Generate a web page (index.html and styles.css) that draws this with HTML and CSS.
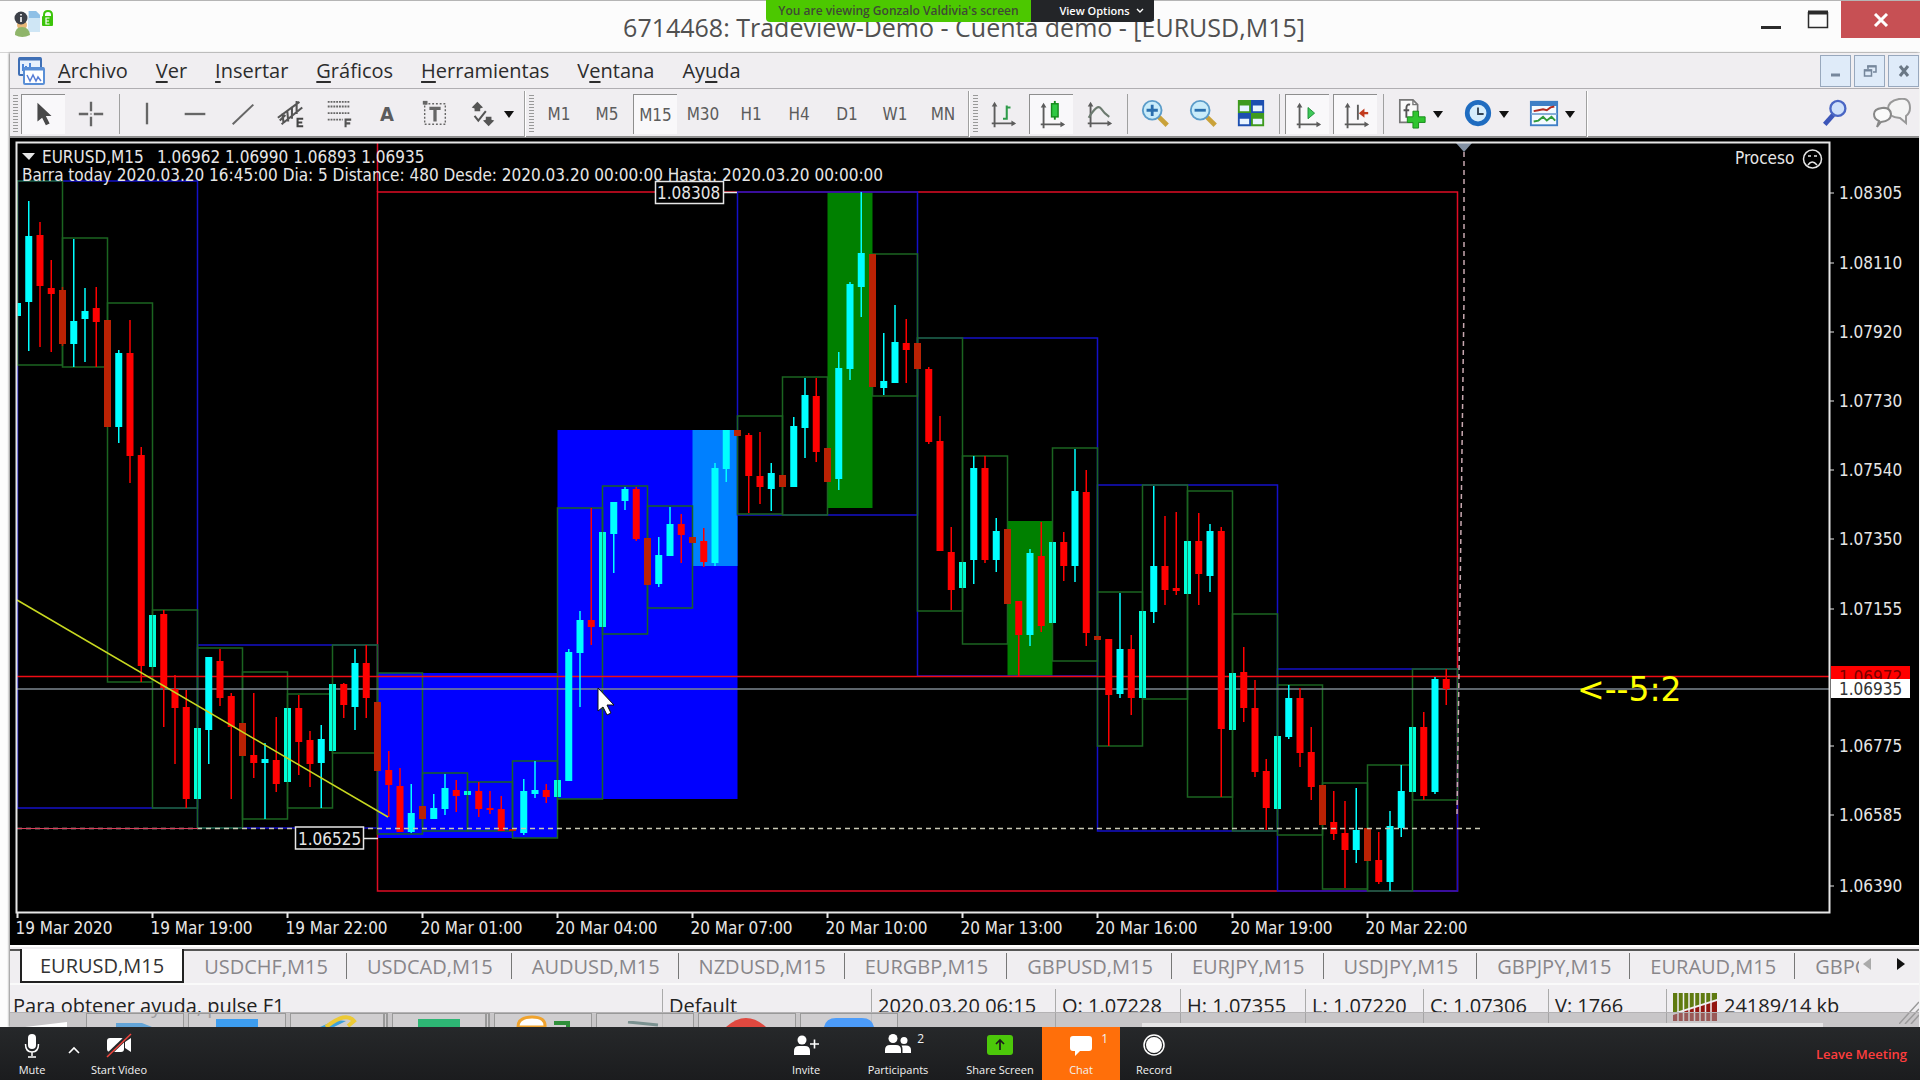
FILE: index.html
```html
<!DOCTYPE html>
<html lang="es">
<head>
    <meta charset="utf-8">
    <title>6714468: Tradeview-Demo - Cuenta demo - [EURUSD,M15]</title>
    <link rel="stylesheet" href="styles.css">
</head>
<body>

<div class="share-banner">
    <span class="share-info">You are viewing Gonzalo Valdivia's screen</span>
    <button class="share-options" type="button">View Options
        <svg width="8" height="6" viewBox="0 0 8 6"><path d="M1 1l3 3 3-3" fill="none" stroke="#fff" stroke-width="1.4"/></svg>
    </button>
</div>

<header class="titlebar">
    <div class="title-icons">
        <svg width="46" height="36" viewBox="0 0 46 36">
            <path d="M15 6h8l4 4v17H15z" fill="#cfe6f5"/>
            <path d="M16 6h7l4 4v3H16z" fill="#8fc0e6"/>
            <circle cx="9" cy="20" r="5" fill="#e8b878"/>
            <path d="M2 30q0-8 7-8t8 8q-8 4-15 0z" fill="#8fb56a"/>
            <circle cx="8" cy="13" r="6.500" fill="#3c4048"/>
            <path d="M8 12v5M8 9v1.500" stroke="#fff" stroke-width="1.600"/>
            <path d="M31 13v-3q0-4 4-4t4 4v3" fill="none" stroke="#3cc40a" stroke-width="2"/>
            <rect x="29" y="11" width="11" height="10" rx="1" fill="#3cc40a"/>
            <path d="M36.500 13H33v6h3.500M33 16h3" fill="none" stroke="#fff" stroke-width="1.200"/>
        </svg>
    </div>
    <h1>6714468: Tradeview-Demo - Cuenta demo - [EURUSD,M15]</h1>
    <div class="win-buttons">
        <button type="button" aria-label="Minimizar"><svg width="22" height="22" viewBox="0 0 22 22"><path d="M1 18.500h20" stroke="#2b2b2b" stroke-width="3"/></svg></button>
        <button type="button" aria-label="Maximizar"><svg width="22" height="22" viewBox="0 0 22 22"><path d="M1.500 3v15.500h19V3" fill="none" stroke="#2b2b2b" stroke-width="1.500"/><path d="M1 3.500h20" stroke="#2b2b2b" stroke-width="4"/></svg></button>
        <button type="button" class="win-close" aria-label="Cerrar"><svg width="16" height="14" viewBox="0 0 16 14"><path d="M2 1l12 12M14 1L2 13" stroke="#fff" stroke-width="3"/></svg></button>
    </div>
</header>

<main class="terminal">
    <div class="menubar">
        <svg class="doc-icon" width="30" height="30" viewBox="0 0 30 30">
            <rect x="2" y="2" width="22" height="17" rx="1" fill="#e9f2fd" stroke="#3f6fb5" stroke-width="2"/>
            <path d="M2 3h22" stroke="#3f6fb5" stroke-width="3"/>
            <path d="M6 8v7M9 10v6M13 7v7" stroke="#4e86d8" stroke-width="2"/>
            <rect x="7" y="12" width="20" height="16" rx="1" fill="#fff" stroke="#5a8fd6" stroke-width="2"/>
            <path d="M7 13h20" stroke="#5a8fd6" stroke-width="3"/>
            <path d="M10 19l3 6 3-6 3 6 2-4 3 4" fill="none" stroke="#5a7fd6" stroke-width="1.500"/>
        </svg>
        <nav>
            <a href="#"><u>A</u>rchivo</a>
            <a href="#"><u>V</u>er</a>
            <a href="#"><u>I</u>nsertar</a>
            <a href="#"><u>G</u>ráficos</a>
            <a href="#"><u>H</u>erramientas</a>
            <a href="#">V<u>e</u>ntana</a>
            <a href="#">Ay<u>u</u>da</a>
        </nav>
        <div class="mdi-buttons">
            <button type="button" aria-label="Minimizar gráfico"><svg width="14" height="14" viewBox="0 0 14 14"><path d="M2 11h9" stroke="#76879c" stroke-width="3"/></svg></button>
            <button type="button" aria-label="Restaurar gráfico"><svg width="14" height="14" viewBox="0 0 14 14"><path d="M5 5V2h8v6h-3" fill="none" stroke="#76879c" stroke-width="1.500"/><path d="M4 2.500h9M1 6.500h8" stroke="#76879c" stroke-width="2"/><rect x="1.500" y="6" width="7" height="6" fill="none" stroke="#76879c" stroke-width="1.500"/></svg></button>
            <button type="button" aria-label="Cerrar gráfico"><svg width="14" height="14" viewBox="0 0 14 14"><path d="M3 2l8 10M11 2L3 12" stroke="#6b7885" stroke-width="3"/></svg></button>
        </div>
    </div>

    <div class="toolbar">
        <i class="grip"></i>
        <button class="tool active" type="button" aria-label="Cursor"><svg viewBox="0 0 32 32"><path d="M9 3v20l5-4 4 8 4-2-4-8h6z" fill="#484848"/></svg></button>
        <button class="tool" type="button" aria-label="Cruz"><svg viewBox="0 0 32 32"><path d="M16 3v10M16 19v10M3 16h10M19 16h10" stroke="#666" stroke-width="2.500"/><path d="M16 15v2" stroke="#666"/></svg></button>
        <i class="sep"></i>
        <button class="tool" type="button" aria-label="Línea vertical"><svg viewBox="0 0 32 32"><path d="M16 4v23" stroke="#666" stroke-width="2.500"/></svg></button>
        <button class="tool" type="button" aria-label="Línea horizontal"><svg viewBox="0 0 32 32"><path d="M5 16h22" stroke="#666" stroke-width="2.500"/></svg></button>
        <button class="tool" type="button" aria-label="Línea de tendencia"><svg viewBox="0 0 32 32"><path d="M5 27L27 6" stroke="#666" stroke-width="2.200"/></svg></button>
        <button class="tool" type="button" aria-label="Canal equidistante"><svg viewBox="0 0 32 32"><path d="M2 20L25 3M6 27L28 9M4 23l6-6M7 15l1 11M12 12l1 12M17 8l0 13M22 2l0 14" stroke="#555" stroke-width="2.200"/><path d="M29 21h-6v8h6M23 25h5" fill="none" stroke="#444" stroke-width="2.200"/></svg></button>
        <button class="tool" type="button" aria-label="Fibonacci"><svg viewBox="0 0 32 32"><path d="M4 3h24M4 8h24M4 15h24M4 22h16" stroke="#666" stroke-width="2" stroke-dasharray="2 1"/><path d="M23 30v-8h6M23 26h5" fill="none" stroke="#555" stroke-width="2.200"/></svg></button>
        <button class="tool letter" type="button">A</button>
        <button class="tool" type="button" aria-label="Etiqueta"><svg viewBox="0 0 32 32"><rect x="5" y="5" width="22" height="22" fill="none" stroke="#666" stroke-width="1.500" stroke-dasharray="2 2"/><path d="M3 2h5v4H3z" fill="#666"/><path d="M10 10h12M16 10v14" stroke="#666" stroke-width="3.500"/></svg></button>
        <button class="tool drop shapes" type="button" aria-label="Flechas"><svg viewBox="0 0 32 32"><path d="M10 3l6 6-3 1v3H7v-3L4 9zM22 29l-6-6 3-1v-3h6v3l3 1z" fill="#555"/><path d="M7 18l4 5 8-10" fill="none" stroke="#555" stroke-width="2.200"/></svg><b></b></button>
        <i class="sep edge"></i>
        <i class="grip"></i>
        <button class="tool" type="button">M1</button>
        <button class="tool" type="button">M5</button>
        <button class="tool active" type="button">M15</button>
        <button class="tool" type="button">M30</button>
        <button class="tool" type="button">H1</button>
        <button class="tool" type="button">H4</button>
        <button class="tool" type="button">D1</button>
        <button class="tool" type="button">W1</button>
        <button class="tool" type="button">MN</button>
        <i class="sep edge"></i>
        <i class="grip"></i>
        <button class="tool" type="button" aria-label="Barras"><svg viewBox="0 0 32 32"><path d="M7 30V6M4 26h24" stroke="#5c5c5c" stroke-width="2"/><path d="M7 3l3 5H4zM30 26l-5-3v6z" fill="#5c5c5c"/><path d="M20 7v15M20 9h4M16 21h4" stroke="#2f9b4a" stroke-width="2.200"/></svg></button>
        <button class="tool active" type="button" aria-label="Velas"><svg viewBox="0 0 32 32"><path d="M7 30V6M4 26h24" stroke="#5c5c5c" stroke-width="2"/><path d="M7 3l3 5H4zM30 26l-5-3v6z" fill="#5c5c5c"/><path d="M19 1v20" stroke="#168a1d" stroke-width="2"/><rect x="15.500" y="4" width="7" height="14" fill="#2fc943" stroke="#168a1d" stroke-width="1.500"/></svg></button>
        <button class="tool" type="button" aria-label="Línea"><svg viewBox="0 0 32 32"><path d="M7 30V6M4 26h24" stroke="#5c5c5c" stroke-width="2"/><path d="M7 3l3 5H4zM30 26l-5-3v6z" fill="#5c5c5c"/><path d="M5 20Q14 5 18 10q4 6 9 9" fill="none" stroke="#6c7a6f" stroke-width="2.200"/></svg></button>
        <i class="sep"></i>
        <button class="tool" type="button" aria-label="Acercar"><svg viewBox="0 0 32 32"><path d="M20 19l9 9" stroke="#caa23a" stroke-width="5"/><circle cx="13" cy="12" r="10" fill="#c9ecfa" stroke="#5b9cc9" stroke-width="2"/><path d="M13 6v12M7 12h12" stroke="#2a6fae" stroke-width="3"/></svg></button>
        <button class="tool" type="button" aria-label="Alejar"><svg viewBox="0 0 32 32"><path d="M20 19l9 9" stroke="#caa23a" stroke-width="5"/><circle cx="13" cy="12" r="10" fill="#c9ecfa" stroke="#5b9cc9" stroke-width="2"/><path d="M7 12h12" stroke="#2a6fae" stroke-width="3"/></svg></button>
        <button class="tool" type="button" aria-label="Mosaico"><svg viewBox="0 0 32 32"><path d="M2 1h14v14H2zM16 15h14v14H16z" fill="#3e9a1e"/><path d="M16 1h14v14H16zM2 15h14v14H2z" fill="#1d4fb0"/><path d="M4 7h10v6H4zM18 7h10v6H18zM4 21h10v6H4zM18 21h10v6H18z" fill="#e8f4ff"/></svg></button>
        <i class="sep"></i>
        <button class="tool active" type="button" aria-label="Autodesplazamiento"><svg viewBox="0 0 32 32"><path d="M7 30V6M4 26h24" stroke="#5c5c5c" stroke-width="2"/><path d="M7 3l3 5H4zM30 26l-5-3v6z" fill="#5c5c5c"/><path d="M16 8l7 6-7 6z" fill="#3fc95a" stroke="#1d8f38"/></svg></button>
        <button class="tool active" type="button" aria-label="Desplazar gráfico"><svg viewBox="0 0 32 32"><path d="M7 30V6M4 26h24M18 5v16" stroke="#5c5c5c" stroke-width="2"/><path d="M7 3l3 5H4zM30 26l-5-3v6z" fill="#5c5c5c"/><path d="M21 14h8" stroke="#c23b1e" stroke-width="2.500"/><path d="M19 14l6-5v10z" fill="#c23b1e"/></svg></button>
        <i class="sep"></i>
        <button class="tool drop" type="button" aria-label="Indicadores"><svg viewBox="0 0 32 32"><path d="M3 1h14l5 5v19H3z" fill="#fafafa" stroke="#777" stroke-width="1.800"/><path d="M17 1v5h5" fill="none" stroke="#777" stroke-width="1.500"/><path d="M14 6q-4-1-4 4v10M7 12h6" fill="none" stroke="#555" stroke-width="2"/><path d="M17 13h6v6h7v6h-7v6h-6v-6h-6v-6h6z" fill="#2fc52f" stroke="#16891a"/></svg><b></b></button>
        <button class="tool drop" type="button" aria-label="Periodicidad"><svg viewBox="0 0 32 32"><circle cx="16" cy="15" r="14" fill="#1f6cc0"/><circle cx="16" cy="15" r="9" fill="#d6edfb"/><path d="M16 9v7h6" fill="none" stroke="#345" stroke-width="2"/></svg><b></b></button>
        <button class="tool drop" type="button" aria-label="Plantillas"><svg viewBox="0 0 32 32"><rect x="2" y="3" width="28" height="25" fill="#f4faff" stroke="#3f7fc6" stroke-width="2"/><path d="M2 5h28" stroke="#3f7fc6" stroke-width="5"/><path d="M2 16h28" stroke="#7fa9d6" stroke-width="2"/><path d="M5 13l5-1 5-1 4 1 4-3 4-1" fill="none" stroke="#b32a20" stroke-width="2"/><path d="M5 24l5-1 5-4 4 4 5-4 4 4" fill="none" stroke="#2f9b3a" stroke-width="2"/></svg><b></b></button>
        <i class="sep edge"></i>
        <div class="toolbar-right">
            <button class="tool" type="button" aria-label="Buscar"><svg viewBox="0 0 32 32"><path d="M13 17L4 27" stroke="#3c55b8" stroke-width="5"/><circle cx="18" cy="10" r="8" fill="#cfe0fa" stroke="#4a66c4" stroke-width="2.500"/></svg></button>
            <button class="tool wide-tool" type="button" aria-label="Mensajes"><svg viewBox="0 0 38 32"><path d="M33 25l-6-5q-12-1-12-9t11-10 11 9q0 5-4 8z" fill="#f4f4f4" stroke="#999" stroke-width="2"/><path d="M4 29l2-6q-5-2-5-7t8-6 9 6q0 7-10 8z" fill="#fafafa" stroke="#888" stroke-width="2"/></svg></button>
        </div>
    </div>

    <!-- coordinates run from the top left corner of the whole terminal -->
    <svg id="chart" class="chart" viewBox="10 138 1909 807">
        <rect x="10" y="138" width="1909" height="807" fill="#000"/>
        <g id="zones"></g>
        <g id="boxes" fill="none" stroke-width="1.500"></g>
        <path d="M17 676.500H1830" stroke="#f00c14" stroke-width="1.500"/>
        <path d="M17 689H1830" stroke="#7d8791" stroke-width="1.500"/>
        <g id="candles"></g>
        <path d="M17 600L388 817" stroke="#c8d820" stroke-width="1.500"/>
        <path d="M17 828.500H1480" stroke="#c8c8b4" stroke-width="1.500" stroke-dasharray="5 4"/>
        <path d="M17 828.500H198" stroke="#d8405c" stroke-width="1"/>
        <path d="M1464 152V300L1460 600L1457 815" fill="none" stroke="#c8a8b0" stroke-width="1.500" stroke-dasharray="5 4"/>
        <path d="M1456 143h16l-8 9z" fill="#8391a3"/>
        <path d="M16.500 912.500V142.500H1829.500V912.500z" fill="none" stroke="#e6e6e6" stroke-width="2"/>
        <g stroke="#e6e6e6" stroke-width="1.500" fill="#000">
            <rect x="655.500" y="181.500" width="68" height="22"/>
            <path d="M724 192.500h13"/>
            <rect x="295.500" y="827" width="68" height="22"/>
            <path d="M364 838.500h14"/>
        </g>
        <g class="label">
            <path d="M22 153h13l-6 7z"/>
            <text x="42" y="163">EURUSD,M15</text>
            <text x="157" y="163">1.06962 1.06990 1.06893 1.06935</text>
            <text x="22" y="181">Barra today 2020.03.20 16:45:00 Dia: 5 Distance: 480 Desde: 2020.03.20 00:00:00 Hasta: 2020.03.20 00:00:00</text>
            <text x="1735" y="164">Proceso</text>
            <text x="657" y="199">1.08308</text>
            <text x="298" y="845">1.06525</text>
        </g>
        <g fill="none" stroke="#e6e6e6" stroke-width="1.500">
            <circle cx="1812.500" cy="159" r="9"/>
            <path d="M1808 165q4-6 9 0M1808 156h3M1814 156h3"/>
        </g>
        <g id="axis" class="label"></g>
        <rect x="1831" y="666" width="79" height="14" fill="#f00"/>
        <text class="tag-old" x="1839" y="683">1.06972</text>
        <rect x="1831" y="679" width="79" height="19" fill="#fff"/>
        <text class="tag-now" x="1839" y="695">1.06935</text>
        <text class="countdown" x="1577" y="701">&lt;--5:2</text>
        <path d="M598 688v23l5-4 4 8 4-2-4-8h7z" fill="#fff" stroke="#111"/>
    </svg>

    <div class="tabs">
        <button class="tab active" type="button">EURUSD,M15</button>
        <button class="tab" type="button">USDCHF,M15</button>
        <button class="tab" type="button">USDCAD,M15</button>
        <button class="tab" type="button">AUDUSD,M15</button>
        <button class="tab" type="button">NZDUSD,M15</button>
        <button class="tab" type="button">EURGBP,M15</button>
        <button class="tab" type="button">GBPUSD,M15</button>
        <button class="tab" type="button">EURJPY,M15</button>
        <button class="tab" type="button">USDJPY,M15</button>
        <button class="tab" type="button">GBPJPY,M15</button>
        <button class="tab" type="button">EURAUD,M15</button>
        <button class="tab cut" type="button">GBPC</button>
        <div class="tab-arrows">
            <button type="button" aria-label="Anterior"><svg width="8" height="12" viewBox="0 0 8 12"><path d="M8 0v12L0 6z" fill="#aaa"/></svg></button>
            <button type="button" aria-label="Siguiente"><svg width="8" height="12" viewBox="0 0 8 12"><path d="M0 0v12l8-6z" fill="#111"/></svg></button>
        </div>
    </div>

    <footer class="status">
        <span class="cell help">Para obtener ayuda, pulse F1</span>
        <span class="cell profile">Default</span>
        <span class="cell date">2020.03.20 06:15</span>
        <span class="cell">O: 1.07228</span>
        <span class="cell">H: 1.07355</span>
        <span class="cell low">L: 1.07220</span>
        <span class="cell">C: 1.07306</span>
        <span class="cell low">V: 1766</span>
        <span class="cell traffic">
            <svg width="44" height="28" viewBox="0 0 44 28">
                <path d="M0 0h44v6L0 20z" fill="#5f7a10"/>
                <path d="M0 22L44 8v20H0z" fill="#93150f"/>
                <path d="M5 0v28M10.500 0v28M16 0v28M21.500 0v28M27 0v28M32.500 0v28M38 0v28" stroke="#f0eef1" stroke-width="1.500"/>
            </svg>
            24189/14 kb
        </span>
        <svg class="resize" width="20" height="24" viewBox="0 0 20 24"><path d="M0 24L20 2M6 24L20 9M12 24l8-9" stroke="#999" stroke-width="1.500"/></svg>
        <div class="taskbar">
            <span class="start"><svg width="42" height="5" viewBox="0 0 42 5"><path d="M0 5l42-5v5z" fill="#fff"/></svg></span>
            <span class="task"><svg width="38" height="5" viewBox="0 0 38 5"><path d="M0 5V1h26l10 4z" fill="#64a5d8"/></svg></span>
            <span class="task"><svg width="42" height="8" viewBox="0 0 42 8"><path d="M0 0h42v8H0z" fill="#3d9df0"/></svg></span>
            <span class="task many"><svg width="42" height="12" viewBox="0 0 42 12"><path d="M4 12L20 5l10 1-12 6z" fill="#3da0dc"/><path d="M10 12Q30-4 38 6l-6 5" fill="none" stroke="#ecc935" stroke-width="4"/></svg></span>
            <span class="task many"><svg width="42" height="8" viewBox="0 0 42 8"><path d="M0 0h42v8H0z" fill="#2db674"/></svg></span>
            <span class="task"><svg width="54" height="12" viewBox="0 0 54 12"><path d="M2 12Q2 2 16 2t13 10z" fill="#fff" stroke="#f0a32e" stroke-width="3"/><path d="M38 8h14v4" fill="none" stroke="#2f8f3a" stroke-width="4"/></svg></span>
            <span class="task"><svg width="38" height="6" viewBox="0 0 38 6"><path d="M2 1l30 3" stroke="#7a9190" stroke-width="3"/></svg></span>
            <span class="task"><svg width="42" height="9" viewBox="0 0 42 9"><path d="M0 9q20-18 40 0z" fill="#e0483f"/></svg></span>
            <span class="task"><svg width="50" height="9" viewBox="0 0 50 9"><path d="M0 9q2-9 12-9h26q10 0 12 9z" fill="#4c9cfa"/></svg></span>
            <span class="tray"></span>
        </div>
    </footer>
</main>

<div class="meeting">
    <div class="meeting-left">
        <button class="call mute" type="button"><svg viewBox="0 0 32 32"><rect x="12" y="4" width="8" height="15" rx="4" fill="#fff"/><path d="M9.500 14q0 8 6.500 8t6.500-8M16 22v4M12 27h8" fill="none" stroke="#fff" stroke-width="1.500"/></svg>Mute</button>
        <button class="call-caret" type="button" aria-label="Audio"><svg width="12" height="8" viewBox="0 0 12 8"><path d="M1 7l5-5 5 5" fill="none" stroke="#fff" stroke-width="1.600"/></svg></button>
        <button class="call video" type="button"><svg viewBox="0 0 32 32"><rect x="4" y="8" width="17" height="14" rx="3" fill="#fff"/><path d="M22 12l6-4v14l-6-4z" fill="#fff"/><path d="M4 26L28 3" stroke="#26282a" stroke-width="4"/><path d="M4 27L28 4" stroke="#f0443c" stroke-width="1.500"/></svg>Start Video</button>
    </div>
    <div class="meeting-center">
        <button class="call people" type="button"><svg viewBox="0 0 32 32"><circle cx="12" cy="10" r="4.500" fill="#fff"/><path d="M4 25v-4q0-5 5-5h6q5 0 5 5v4z" fill="#fff"/><path d="M20 14h9M24.500 9.500v9" stroke="#fff" stroke-width="1.600"/></svg>Invite</button>
        <button class="call people" type="button"><svg viewBox="0 0 32 32"><circle cx="11" cy="8.500" r="4.500" fill="#fff"/><path d="M3 23v-3q0-5 5-5h6q5 0 5 5v3z" fill="#fff"/><circle cx="22" cy="10.500" r="3.500" fill="#fff"/><path d="M20.500 23v-4q0-2-1-3.500h4.500q5 0 5 4.500v3z" fill="#fff"/></svg>Participants<em>2</em></button>
        <button class="call screen" type="button"><svg viewBox="0 0 32 32"><rect x="3" y="5" width="26" height="20" rx="3" fill="#4cc80a"/><path d="M16 20v-9M12 14l4-4 4 4" fill="none" stroke="#1b1b1b" stroke-width="1.700"/></svg>Share Screen</button>
        <button class="call chat" type="button"><svg viewBox="0 0 32 32"><path d="M8 6h16q3 0 3 3v9q0 3-3 3h-9l-5 5v-5H8q-3 0-3-3V9q0-3 3-3z" fill="#fff"/></svg>Chat<em>1</em></button>
        <button class="call record" type="button"><svg viewBox="0 0 32 32"><circle cx="16" cy="15" r="10" fill="none" stroke="#fff" stroke-width="1.500"/><circle cx="16" cy="15" r="8" fill="#fff"/></svg>Record</button>
    </div>
    <button class="leave" type="button">Leave Meeting</button>
</div>

<script src="chart.js"></script>
</body>
</html>
```
FILE: styles.css
```css
* {
    box-sizing: border-box;
}
body {
    margin: 0;
    min-height: 100vh;
    display: flex;
    flex-direction: column;
    background: #fcfcfc;
    color: #222;
    font-family: "Open Sans", "Segoe UI", sans-serif;
    overflow-x: hidden;
}
button {
    margin: 0;
    padding: 0;
    border: 0;
    background: none;
    color: inherit;
    font: inherit;
    cursor: pointer;
}
svg {
    display: block;
    flex-shrink: 0;
}

/* sharing banner on top of everything */
.share-banner {
    position: absolute;
    top: 0;
    left: 50%;
    transform: translateX(-50%);
    z-index: 5;
    display: flex;
    height: 22px;
    font-size: 12px;
    font-weight: 600;
    line-height: 22px;
    border-radius: 0 0 4px 4px;
    overflow: hidden;
    white-space: nowrap;
}
.share-info {
    width: 265px;
    text-align: center;
    background: #4cc800;
    color: #3f4a35;
}
.share-options {
    width: 123px;
    display: flex;
    align-items: center;
    justify-content: center;
    gap: 6px;
    padding-left: 18px;
    background: #232528;
    color: #fff;
    font-size: 11px;
}

/* title bar */
.titlebar {
    display: grid;
    grid-template-columns: 1fr auto 1fr;
    align-items: center;
    height: 53px;
    border-top: 1px solid #b5b5b5;
    border-bottom: 1px solid #d5d5d5;
}
.title-icons {
    padding: 0 0 8px 13px;
}
.titlebar h1 {
    margin: 0;
    padding-left: 8px;
    font-size: 25px;
    font-weight: 400;
    color: #505050;
    white-space: nowrap;
}
.win-buttons {
    display: flex;
    justify-content: flex-end;
    align-self: start;
}
.win-buttons button {
    width: 47px;
    height: 37px;
    display: flex;
    align-items: center;
    justify-content: center;
}
.win-buttons .win-close {
    width: 79px;
    background: #c75054;
}

/* terminal window */
.terminal {
    margin: 0 1px 0 10px;
    background: #f0eef1;
    box-shadow: -1px 0 2px #888;
}
.menubar {
    display: flex;
    align-items: center;
    height: 36px;
    border-bottom: 1px solid #b0aeb2;
}
.doc-icon {
    margin: 0 11px 0 7px;
}
.menubar nav {
    display: flex;
    gap: 28px;
    font-size: 20px;
    line-height: 28px;
}
.menubar a {
    color: #2c2c2c;
    text-decoration: none;
}
.menubar u {
    text-underline-offset: 3px;
}
.mdi-buttons {
    display: flex;
    gap: 3px;
    margin-left: auto;
}
.mdi-buttons button {
    width: 31px;
    height: 32px;
    display: flex;
    align-items: center;
    justify-content: center;
    border: 1px solid #98a8bd;
    background: #dfebf9;
}

/* toolbar */
.toolbar {
    display: flex;
    align-items: center;
    height: 49px;
    padding-top: 3px;
    border-bottom: 2px solid #8e8e8e;
    color: #5c5c5c;
    font-family: "DejaVu Sans Condensed", "DejaVu Sans", sans-serif;
    font-size: 17px;
}
.grip {
    width: 5px;
    height: 38px;
    margin: 0 1px 0 3px;
    background: repeating-linear-gradient(#999 0 1px, #f0eef1 1px 3px);
}
.tool {
    width: 48px;
    height: 40px;
    display: flex;
    align-items: center;
    justify-content: center;
    flex-shrink: 0;
}
.tool svg {
    width: 30px;
    height: 30px;
}
.tool.active {
    width: 44px;
    margin: 0 2px;
    border-top: 1px solid #8e8e8e;
    border-left: 1px solid #8e8e8e;
    background: #f9f8fa;
}
.tool.letter {
    font-size: 20px;
    font-weight: bold;
}
.tool.drop {
    width: 66px;
    gap: 6px;
}
.tool.shapes {
    width: 64px;
}
.tool.drop b {
    border: 5px solid transparent;
    border-top: 7px solid #111;
    border-bottom: 0;
}
.sep {
    width: 8px;
    height: 40px;
    background: linear-gradient(90deg, transparent 4px, #a0a0a0 4px 5px, transparent 5px);
}
.sep.edge {
    width: 3px;
    height: 46px;
    background: linear-gradient(90deg, transparent 1px, #a0a0a0 1px 2px, #fff 2px);
}
.toolbar-right {
    display: flex;
    margin-left: auto;
    gap: 8px;
    padding-right: 3px;
}
.wide-tool svg {
    width: 38px;
    height: 32px;
}

/* chart */
.chart {
    width: 100%;
    height: auto;
    background: #000;
}
.label {
    fill: #e6e6e6;
    font-family: "DejaVu Sans Condensed", "DejaVu Sans", sans-serif;
    font-size: 17px;
}
.tag-old,
.tag-now {
    fill: #333;
    font-family: "DejaVu Sans Condensed", "DejaVu Sans", sans-serif;
    font-size: 17px;
}
.tag-old {
    fill: #7a0000;
}
.countdown {
    fill: #ffff00;
    font-family: "DejaVu Sans", sans-serif;
    font-size: 33px;
}

/* symbol tabs */
.tabs {
    display: flex;
    height: 40px;
    padding: 0 0 3px 10px;
    border-top: 2px solid #fff;
    border-bottom: 2px solid #fafafa;
    background: linear-gradient(#f0eef1 2px, #555 2px 4px, #f0eef1 4px);
    font-size: 20px;
    white-space: nowrap;
    overflow: hidden;
}
.tab {
    height: 34px;
    margin-top: 2px;
    padding: 0 19px 0 20px;
    color: #88868a;
}
.tab:not(.active):not(.cut) {
    background: linear-gradient(#777, #777) right center / 1px 26px no-repeat;
}
.tab.active {
    border: 2px solid #222;
    border-top: 0;
    padding: 0 18px;
    background: #fff;
    color: #333;
}
.tab.cut {
    width: 64px;
    padding-right: 0;
    overflow: hidden;
    text-align: left;
}
.tab-arrows {
    display: flex;
    align-items: center;
    gap: 26px;
    margin-left: auto;
    padding-right: 14px;
}

/* status line with the shared desktop's taskbar showing over it */
.status {
    position: relative;
    display: flex;
    height: 42px;
    font-size: 20px;
    line-height: 42px;
    white-space: nowrap;
    overflow: hidden;
}
.cell {
    width: 125px;
    padding-left: 7px;
    background: linear-gradient(#aaa, #aaa) left 4px / 1px 38px no-repeat;
}
.cell.help {
    flex: 1;
    padding-left: 3px;
    background: none;
}
.cell.profile {
    width: 209px;
}
.cell.date {
    width: 184px;
}
.cell.low {
    width: 118px;
}
.cell.traffic {
    display: flex;
    width: 253px;
    gap: 7px;
}
.cell.traffic svg {
    margin-top: 8px;
}
.resize {
    position: absolute;
    right: 0;
    bottom: 3px;
}
.taskbar {
    position: absolute;
    left: 0;
    right: 0;
    bottom: 0;
    display: flex;
    gap: 4px;
    height: 15px;
    background: rgba(160, 158, 160, 0.5);
    border-top: 1px solid #b4b2b4;
}
.start,
.task {
    display: flex;
    align-items: flex-end;
    justify-content: center;
    width: 98px;
    border: 1px solid #999;
    border-width: 1px 1px 0;
    background: rgba(215, 214, 216, 0.5);
}
.start {
    width: 72px;
    border: 0;
    background: none;
}
.many {
    border-right: 5px double #999;
}
.tray {
    flex: 1;
    height: 4px;
    margin: 10px 96px 0 240px;
    background: #e6e5e6;
}

/* meeting controls */
.meeting {
    display: grid;
    grid-template-columns: 760fr auto 732fr;
    align-items: stretch;
    height: 53px;
    margin-top: auto;
    background: linear-gradient(#26282a, #1b1c1e);
    color: #f2f2f2;
    font-size: 11px;
}
.meeting-left,
.meeting-center {
    display: flex;
}
.call {
    position: relative;
    display: flex;
    flex-direction: column;
    align-items: center;
    justify-content: flex-end;
    height: 53px;
    padding-bottom: 3px;
    line-height: 14px;
}
.call svg {
    width: 32px;
    height: 32px;
    margin-bottom: 1px;
}
.call em {
    position: absolute;
    top: 5px;
    right: 12px;
    font-style: normal;
    font-size: 12px;
}
.mute {
    width: 64px;
}
.call-caret {
    width: 20px;
    display: flex;
    align-items: center;
    justify-content: center;
    padding-bottom: 8px;
}
.video {
    width: 70px;
}
.people {
    width: 92px;
}
.people em {
    right: 20px;
}
.screen {
    width: 98px;
    padding-left: 14px;
}
.chat {
    width: 78px;
    background: #ff6f0a;
}
.record {
    width: 68px;
}
.leave {
    justify-self: end;
    padding-right: 13px;
    color: #ff3d3d;
    font-size: 13px;
    font-weight: 600;
}
```
FILE: chart.js
```js
const NS = "http://www.w3.org/2000/svg";
const STEP = 11.25;
const LEFT = 17.5;

// kind, body top, body bottom, high, low
// c = up, r = down, d = down on the hour, m = up on the hour
const candles = [
    "c 303 316", "c 236 302 201 351", "r 235 286 222 347", "r 288 294 260 352",
    "d 290 344 287 346", "c 321 344 239 367", "c 311 319 288 362", "r 308 322 287 367",
    "d 320 427", "c 353 427 350 443", "r 353 456 320 483", "r 455 666 447 682",
    "m 615 667", "r 614 688 610 727", "r 689 708 675 764", "r 707 799 690 808",
    "m 728 799", "c 657 730 657 764", "r 661 698 649 706", "r 696 727 693 799",
    "d 723 756", "r 755 763 693 778", "c 759 763 743 819", "r 760 784 717 792",
    "m 708 782", "r 708 742 695 775", "r 740 764 731 787", "c 739 763 725 808",
    "m 684 751", "r 684 705 683 718", "c 663 707 649 730", "r 663 698 645 718",
    "d 702 771", "r 770 785 751 817", "r 786 832 768 832", "c 813 832 784 833",
    "d 806 819", "c 808 819 794 819", "c 788 809 774 815", "r 790 796 780 812",
    "m 791 795", "r 791 809 782 817", "r 808 810 791 814", "r 809 831 796 831",
    "d 829 831", "c 791 833 779 835", "c 790 794 761 798", "r 790 797 784 803",
    "m 780 797", "c 652 781 649 781", "c 620 653 611 707", "r 620 627 508 645",
    "m 532 627", "c 502 534 502 573", "c 489 501 487 510", "r 489 539 487 541",
    "d 538 585", "c 555 584 537 587", "c 524 556 507 556", "r 524 535 514 563",
    "d 537 543", "r 541 562 528 567", "c 468 563 463 566", "c 430 469 430 482",
    "d 430 436", "r 435 476 433 513", "r 476 487 432 504", "c 473 489 463 511",
    "d 475 487", "c 426 487 417 487", "c 395 428 378 458", "r 396 452 378 462",
    "d 448 482", "c 368 479 352 490", "c 284 369 282 380", "c 253 287 192 317",
    "d 254 387", "c 381 388 333 395", "c 342 383 305 383", "r 343 350 319 383",
    "d 343 369", "r 369 442 367 444", "r 441 551 416 551", "r 552 590 527 610",
    "m 562 588", "c 468 560 456 584", "r 468 560 456 563", "c 531 560 518 572",
    "d 529 604", "r 601 635 601 676", "c 553 635 549 646", "r 556 626 522 632",
    "m 542 623", "r 542 566 532 581", "c 491 566 449 582", "r 492 633 470 646",
    "d 636 640", "r 639 695 639 746", "c 649 694 593 698", "r 649 698 635 715",
    "m 611 698", "c 566 612 486 623", "r 566 590 516 605", "r 588 591 512 595",
    "m 541 594", "r 541 574 513 605", "c 531 576 524 592", "r 531 729 527 797",
    "m 673 730", "r 672 708 647 722", "r 708 772 680 777", "r 771 808 759 830",
    "m 736 809", "c 698 737 685 739", "r 698 753 688 767", "r 752 787 727 800",
    "d 785 825", "r 822 834 791 840", "r 833 850 801 888", "c 830 850 788 863",
    "d 828 861", "r 860 882 832 884", "c 826 882 811 891", "c 791 828 765 837",
    "m 727 792", "r 727 796 712 800", "c 679 792 677 794", "r 679 689 669 705"
];

// hourly ranges, one for every four candles
const hours = [
    [181, 365], [238, 367], [303, 682], [610, 808], [648, 828], [672, 819], [694, 808], [645, 753],
    [673, 834], [773, 831], [782, 831], [761, 838], [508, 799], [486, 634], [506, 608], null,
    [416, 514], [377, 515], null, [254, 396], [338, 611], [456, 644], null, [448, 661],
    [592, 746], [485, 699], [491, 797], [614, 831], [685, 835], [783, 889], [765, 891], [669, 800]
];

// four hour ranges
const sessions = [
    [181, 808], [645, 828], null, null, [192, 515], [338, 676], [485, 831], [669, 891]
];

const prices = [
    ["1.08305", 193], ["1.08110", 263], ["1.07920", 332], ["1.07730", 401], ["1.07540", 470],
    ["1.07350", 539], ["1.07155", 609], ["1.06775", 746], ["1.06585", 815], ["1.06390", 886]
];

const times = [
    "19 Mar 2020", "19 Mar 19:00", "19 Mar 22:00", "20 Mar 01:00", "20 Mar 04:00", "20 Mar 07:00",
    "20 Mar 10:00", "20 Mar 13:00", "20 Mar 16:00", "20 Mar 19:00", "20 Mar 22:00"
];

const colors = { c: "#00ffff", r: "#ff0000", d: "#ba2204", m: "#00ffd8" };

function xAt(i) {
    return LEFT + i * STEP;
}

function add(parent, tag, attrs, text) {
    const el = document.createElementNS(NS, tag);
    for (const key in attrs) {
        el.setAttribute(key, attrs[key]);
    }
    if (text) {
        el.textContent = text;
    }
    document.getElementById(parent).appendChild(el);
}

function range(parent, from, to, top, bottom, attrs) {
    add(parent, "rect", Object.assign({
        x: xAt(from), y: top, width: (to - from) * STEP, height: bottom - top
    }, attrs));
}

// filled zones
range("zones", 32, 48, 673, 838, { fill: "#0000ff" });
range("zones", 48, 64, 430, 799, { fill: "#0000ff" });
range("zones", 60, 64, 430, 566, { fill: "#0080ff" });
range("zones", 72, 76, 192, 508, { fill: "#008000" });
range("zones", 88, 92, 521, 676, { fill: "#008000" });

// day range, then sessions, then hours
range("boxes", 32, 128, 192, 891, { stroke: "#e00c24" });
add("boxes", "path", { d: "M" + xAt(32) + " 143V192", stroke: "#e00c24" });
sessions.forEach((s, i) => {
    if (s) range("boxes", i * 16, i * 16 + 16, s[0], s[1], { stroke: "#1410c8" });
});
hours.forEach((h, i) => {
    if (h) range("boxes", i * 4, i * 4 + 4, h[0], h[1], { stroke: "#1b6420" });
});

candles.forEach((line, i) => {
    const [kind, top, bottom, high, low] = line.split(" ");
    const x = xAt(i);
    const color = colors[kind];
    if (high) {
        add("candles", "path", { d: `M${x} ${high}V${low}`, stroke: color, "stroke-width": 1.5 });
    }
    const left = i === 0 ? x : x - 3.5;
    add("candles", "rect", { x: left, y: top, width: x + 3.5 - left, height: bottom - top, fill: color });
    if (kind === "m") {
        add("candles", "path", { d: `M${x} ${top}V${bottom}`, stroke: "#109070", "stroke-width": 1 });
    }
});

prices.forEach(([text, y]) => {
    add("axis", "path", { d: `M1830 ${y}h4`, stroke: "#e6e6e6" });
    add("axis", "text", { x: 1839, y: y + 6 }, text);
});
times.forEach((text, i) => {
    const x = xAt(i * 12);
    add("axis", "path", { d: `M${x} 913v5`, stroke: "#e6e6e6", "stroke-width": 2 });
    add("axis", "text", { x: x - 2, y: 934 }, text);
});
```
